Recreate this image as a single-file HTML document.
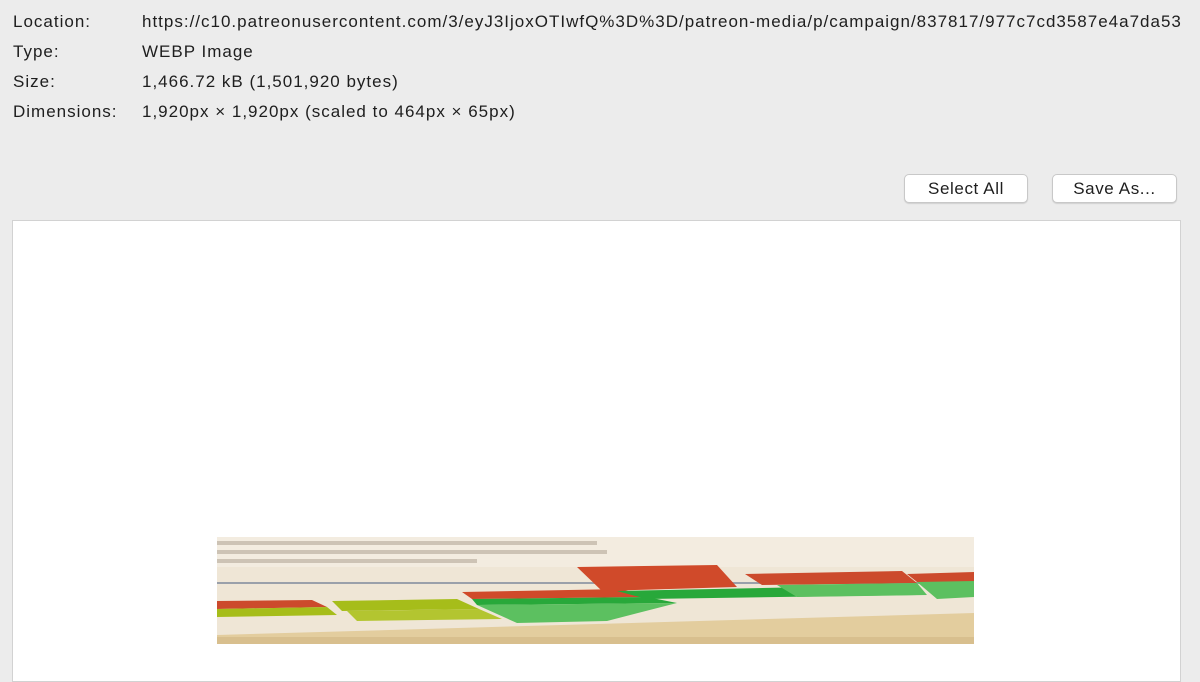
<!DOCTYPE html>
<html><head><meta charset="utf-8"><style>
body{margin:0;width:1200px;height:662px;background:#ececec;font-family:"Liberation Sans",sans-serif;font-size:17px;letter-spacing:1px;color:#1e1e1e;overflow:hidden;position:relative}
.l{position:absolute;left:13px}.v{position:absolute;left:142px;white-space:nowrap;letter-spacing:1px}
.btn{position:absolute;top:174px;height:27px;background:#fff;border:1px solid #c8c8c8;border-radius:5px;box-shadow:0 1px 1px rgba(0,0,0,.12);text-align:center;line-height:27px;font-size:17px;letter-spacing:.6px}
.panel{position:absolute;left:12px;top:220px;width:1167px;height:460px;background:#fff;border:1px solid #d2d2d2}
svg{position:absolute;left:217px;top:537px}
</style></head><body>
<div class="l" style="top:12px">Location:</div><div class="v" style="top:12px">https://c10.patreonusercontent.com/3/eyJ3IjoxOTIwfQ%3D%3D/patreon-media/p/campaign/837817/977c7cd3587e4a7da53</div>
<div class="l" style="top:42px">Type:</div><div class="v" style="top:42px">WEBP Image</div>
<div class="l" style="top:72px">Size:</div><div class="v" style="top:72px">1,466.72 kB (1,501,920 bytes)</div>
<div class="l" style="top:102px">Dimensions:</div><div class="v" style="top:102px">1,920px × 1,920px (scaled to 464px × 65px)</div>
<div class="btn" style="left:904px;width:122px">Select All</div>
<div class="btn" style="left:1052px;width:123px">Save As...</div>
<div class="panel"></div>
<svg width="757" height="107" viewBox="0 0 757 107">
<rect width="757" height="107" fill="#efe6d6"/>
<rect y="0" width="757" height="30" fill="#f3ece0"/>
<g fill="#bdb3a3" opacity=".7"><rect x="0" y="4" width="380" height="4"/><rect x="0" y="13" width="390" height="4"/><rect x="0" y="22" width="260" height="4"/></g>
<rect x="0" y="45" width="757" height="2" fill="#9aa0aa"/>
<polygon points="0,64 95,63 110,70 0,72" fill="#cc4a2c"/>
<polygon points="0,72 110,70 120,78 0,80" fill="#a6bd1a"/>
<polygon points="115,64 240,62 262,72 125,74" fill="#a6bd1a"/>
<polygon points="130,74 262,72 285,82 140,84" fill="#b3c530"/>
<polygon points="245,55 405,52 430,60 255,62" fill="#d04a2a"/>
<polygon points="255,62 430,60 460,66 260,68" fill="#28a83a"/>
<polygon points="260,68 460,66 390,84 300,86" fill="#5cc060"/>
<polygon points="360,30 500,28 520,50 385,54" fill="#d04a2a"/>
<polygon points="400,54 690,48 700,58 430,62" fill="#28a83a"/>
<polygon points="528,37 685,34 700,46 545,48" fill="#cc4a2c"/>
<polygon points="560,48 700,46 710,58 580,60" fill="#5cc060"/>
<polygon points="690,37 757,35 757,45 700,45" fill="#cc4a2c"/>
<polygon points="700,45 757,44 757,60 720,62" fill="#5cc060"/>
<polygon points="0,98 757,76 757,107 0,107" fill="#e3cd9e"/>
<rect x="0" y="100" width="757" height="7" fill="#d8bf8e"/>
</svg>
</body></html>
